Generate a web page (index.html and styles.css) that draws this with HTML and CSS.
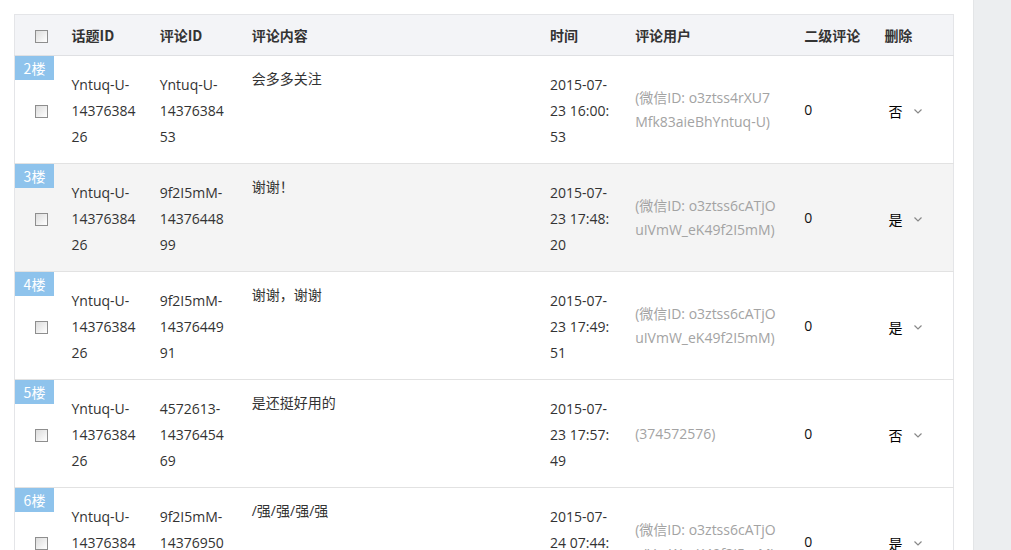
FILE: index.html
```html
<!DOCTYPE html>
<html lang="zh-CN">
<head>
<meta charset="utf-8">
<title>评论管理</title>
<link rel="stylesheet" href="styles.css">
</head>
<body>
<div class="page">
  <main class="main">
    <table class="grid">
      <colgroup>
        <col class="c-check"><col class="c-topic"><col class="c-cid"><col class="c-content"><col class="c-time"><col class="c-user"><col class="c-sub"><col class="c-del">
      </colgroup>
      <thead>
        <tr>
          <th class="chk"><span class="cb"></span></th>
          <th>话题ID</th>
          <th>评论ID</th>
          <th>评论内容</th>
          <th>时间</th>
          <th>评论用户</th>
          <th>二级评论</th>
          <th>删除</th>
        </tr>
      </thead>
      <tbody>
        <tr>
          <td class="chk"><span class="floor">2楼</span><span class="cb"></span></td>
          <td><div class="w-id">Yntuq-U-1437638426</div></td>
          <td><div class="w-id">Yntuq-U-1437638453</div></td>
          <td class="content">会多多关注</td>
          <td><div class="w-time">2015-07-23 16:00:53</div></td>
          <td class="user"><div class="w-user">(微信ID: o3ztss4rXU7Mfk83aieBhYntuq-U)</div></td>
          <td class="num">0</td>
          <td><span class="sel">否<svg class="chev" width="8" height="5" viewBox="0 0 8 5"><path d="M0.5 0.5 L4 4 L7.5 0.5" fill="none" stroke="#888" stroke-width="1.2"/></svg></span></td>
        </tr>
        <tr class="alt">
          <td class="chk"><span class="floor">3楼</span><span class="cb"></span></td>
          <td><div class="w-id">Yntuq-U-1437638426</div></td>
          <td><div class="w-id">9f2I5mM-1437644899</div></td>
          <td class="content">谢谢！</td>
          <td><div class="w-time">2015-07-23 17:48:20</div></td>
          <td class="user"><div class="w-user">(微信ID: o3ztss6cATjOuIVmW_eK49f2I5mM)</div></td>
          <td class="num">0</td>
          <td><span class="sel">是<svg class="chev" width="8" height="5" viewBox="0 0 8 5"><path d="M0.5 0.5 L4 4 L7.5 0.5" fill="none" stroke="#888" stroke-width="1.2"/></svg></span></td>
        </tr>
        <tr>
          <td class="chk"><span class="floor">4楼</span><span class="cb"></span></td>
          <td><div class="w-id">Yntuq-U-1437638426</div></td>
          <td><div class="w-id">9f2I5mM-1437644991</div></td>
          <td class="content">谢谢，谢谢</td>
          <td><div class="w-time">2015-07-23 17:49:51</div></td>
          <td class="user"><div class="w-user">(微信ID: o3ztss6cATjOuIVmW_eK49f2I5mM)</div></td>
          <td class="num">0</td>
          <td><span class="sel">是<svg class="chev" width="8" height="5" viewBox="0 0 8 5"><path d="M0.5 0.5 L4 4 L7.5 0.5" fill="none" stroke="#888" stroke-width="1.2"/></svg></span></td>
        </tr>
        <tr>
          <td class="chk"><span class="floor">5楼</span><span class="cb"></span></td>
          <td><div class="w-id">Yntuq-U-1437638426</div></td>
          <td><div class="w-id">4572613-1437645469</div></td>
          <td class="content">是还挺好用的</td>
          <td><div class="w-time">2015-07-23 17:57:49</div></td>
          <td class="user"><div class="w-user">(374572576)</div></td>
          <td class="num">0</td>
          <td><span class="sel">否<svg class="chev" width="8" height="5" viewBox="0 0 8 5"><path d="M0.5 0.5 L4 4 L7.5 0.5" fill="none" stroke="#888" stroke-width="1.2"/></svg></span></td>
        </tr>
        <tr>
          <td class="chk"><span class="floor">6楼</span><span class="cb"></span></td>
          <td><div class="w-id">Yntuq-U-1437638426</div></td>
          <td><div class="w-id">9f2I5mM-1437695012</div></td>
          <td class="content">/强/强/强/强</td>
          <td><div class="w-time">2015-07-24 07:44:36</div></td>
          <td class="user"><div class="w-user">(微信ID: o3ztss6cATjOuIVmW_eK49f2I5mM)</div></td>
          <td class="num">0</td>
          <td><span class="sel">是<svg class="chev" width="8" height="5" viewBox="0 0 8 5"><path d="M0.5 0.5 L4 4 L7.5 0.5" fill="none" stroke="#888" stroke-width="1.2"/></svg></span></td>
        </tr>
      </tbody>
    </table>
  </main>
  <aside class="side"></aside>
</div>
</body>
</html>
```
FILE: styles.css
```css
html, body {
  margin: 0;
  padding: 0;
  height: 550px;
  overflow: hidden;
  background: #fff;
}
body {
  font-family: "Open Sans", "Noto Sans CJK SC", sans-serif;
  font-size: 14px;
  color: #333;
}
.page {
  display: flex;
  height: 550px;
}
.main {
  width: 973px;
  padding: 14px 0 0 14px;
  box-sizing: border-box;
}
.side {
  flex: 1;
  background: #eceef0;
  border-left: 1px solid #e3e5e7;
}
.grid {
  width: 940px;
  table-layout: fixed;
  border-collapse: collapse;
  border: 1px solid #e4e5e8;
}
.c-check { width: 45px; }
.c-topic { width: 88px; }
.c-cid { width: 92px; }
.c-content { width: 298px; }
.c-time { width: 85px; }
.c-user { width: 169px; }
.c-sub { width: 80px; }
.c-del { width: 81px; }

.grid th {
  height: 40px;
  background: #f3f4f7;
  font-weight: bold;
  text-align: left;
  padding: 0 0 0 12px;
  color: #333;
  border-bottom: 1px solid #dfe0e3;
  font-family: "Noto Sans CJK SC", sans-serif;
}
.grid td {
  height: 107px;
  padding: 0 0 0 12px;
  vertical-align: middle;
  line-height: 26px;
  border-bottom: 1px solid #e2e2e2;
}
.grid tr.alt td { background: #f4f4f4; }
.grid .chk {
  padding: 0;
  text-align: center;
  position: relative;
}
.cb {
  display: inline-block;
  width: 11px;
  height: 11px;
  border: 1px solid #8e8e8e;
  background: linear-gradient(135deg, #dcdcdc, #ffffff);
  vertical-align: middle;
  margin-left: 8px;
}
th.chk .cb { margin-top: -2px; }
td.chk .cb { margin-top: 2px; }
.floor {
  position: absolute;
  left: 0;
  top: 0;
  width: 39px;
  height: 24px;
  line-height: 24px;
  background: #8ec3ec;
  color: #fff;
  font-size: 14px;
  text-align: center;
  font-family: "Noto Sans CJK SC", sans-serif;
}
.w-id {
  width: 66px;
  overflow-wrap: anywhere;
  padding-top: 3px;
}
.w-time {
  width: 64px;
  word-break: break-all;
  padding-top: 3px;
}
.grid td.content {
  vertical-align: top;
  padding-top: 10px;
  height: 97px;
  box-sizing: content-box;
  line-height: 26px;
}
.grid td.user { color: #a3a3a3; line-height: 24px; }
.w-user {
  width: 144px;
  word-break: break-all;
}
.grid td.num { color: #111; }
.sel {
  display: inline-flex;
  align-items: center;
  padding-left: 4px;
  color: #000;
  font-family: "Noto Sans CJK SC", sans-serif;
  margin-top: 4px;
}
.chev { margin-left: 12px; }
```
